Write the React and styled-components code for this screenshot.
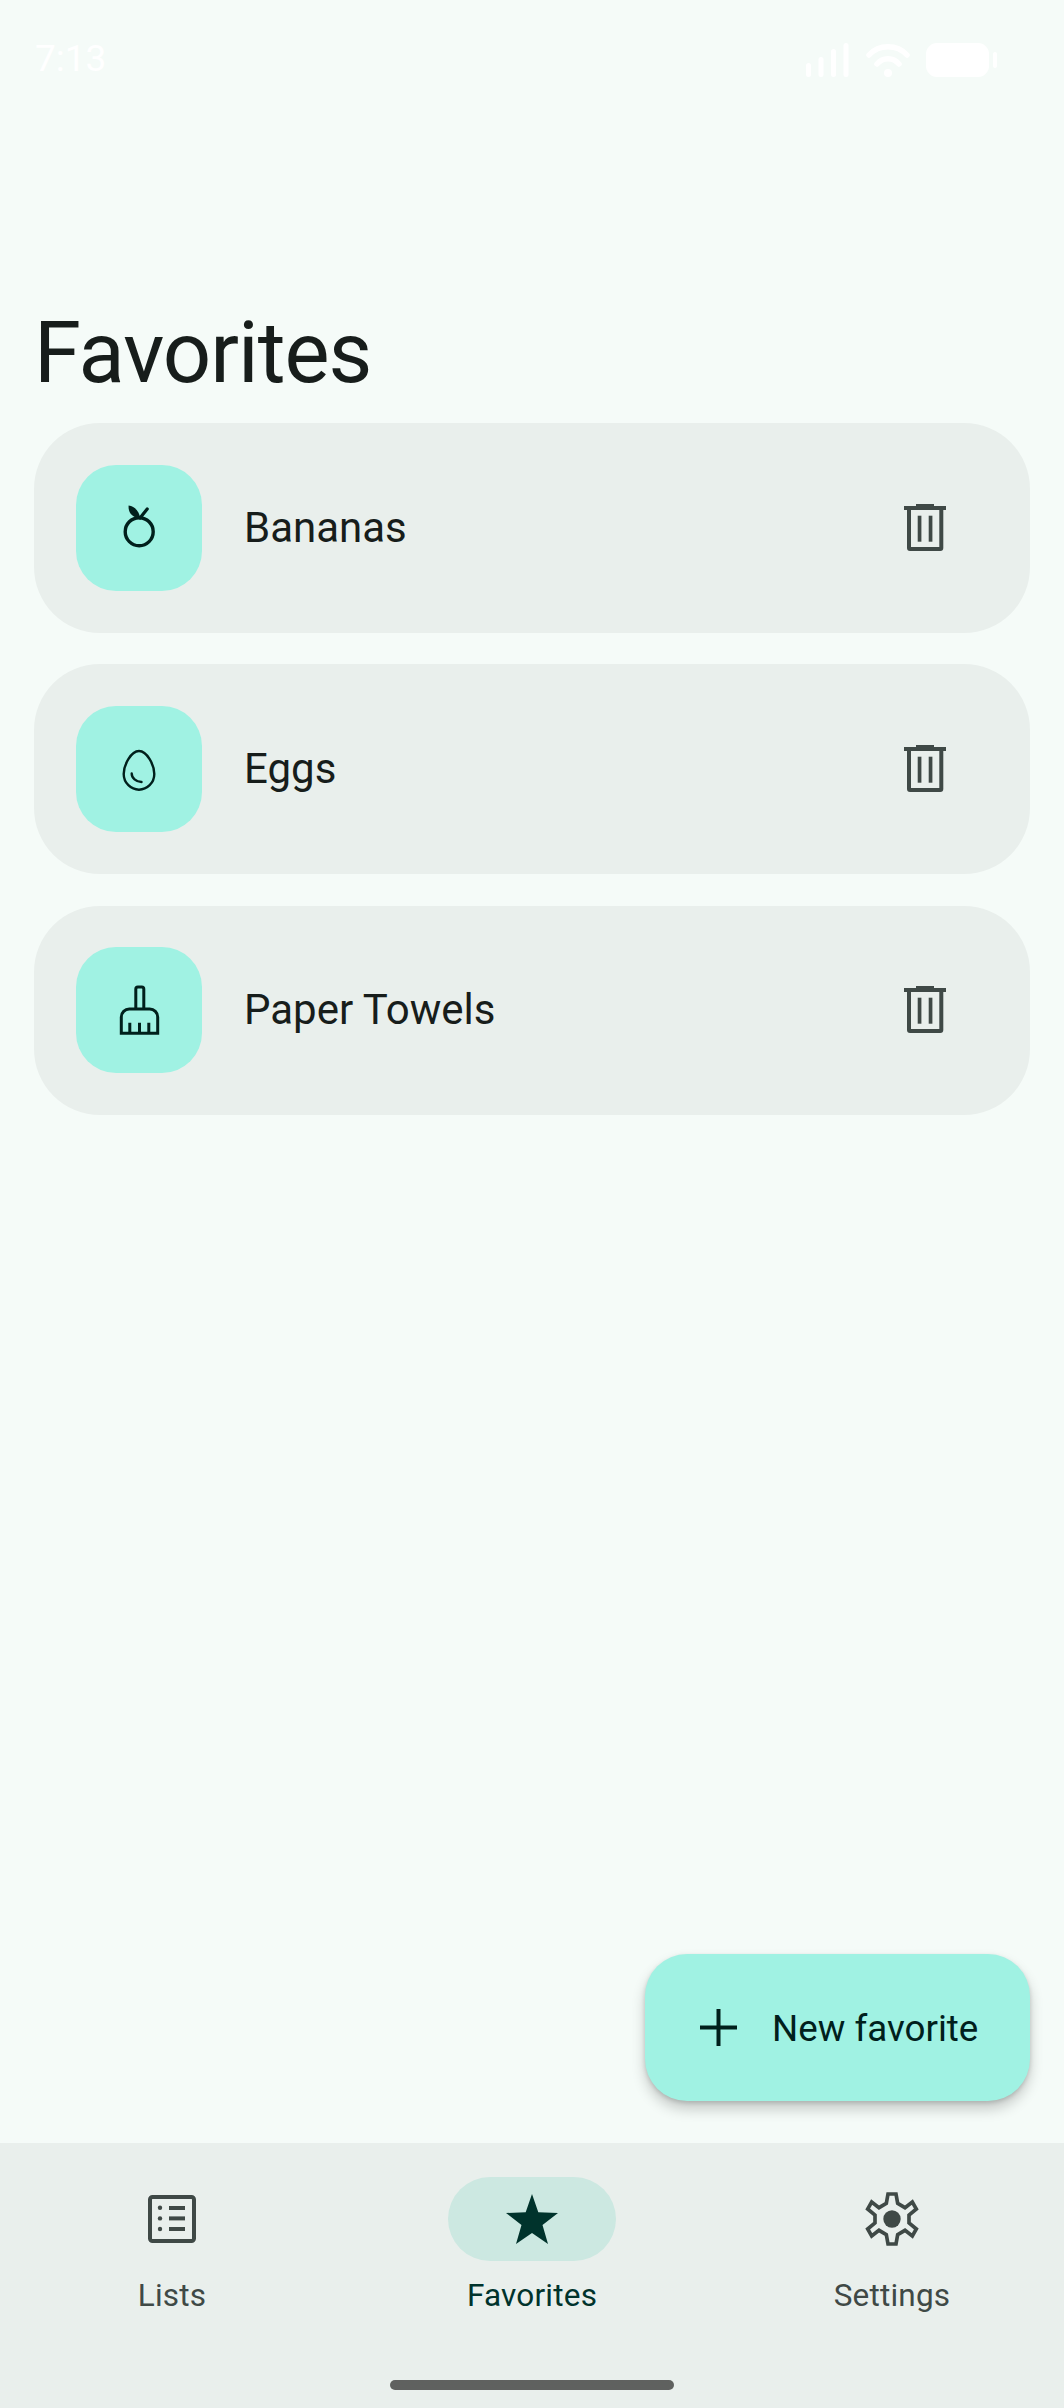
import React from "react";
import styled, { createGlobalStyle } from "styled-components";

const Global = createGlobalStyle`
  html, body { margin: 0; padding: 0; background: #f5fbf8; }
  * { box-sizing: border-box; }
`;

const Screen = styled.div`
  width: 1064px;
  height: 2408px;
  background: #f5fbf8;
  display: flex;
  flex-direction: column;
  font-family: Roboto, "Liberation Sans", sans-serif;
  color: #171d1b;
  overflow: hidden;
`;

const StatusBar = styled.div`
  height: 120px;
  flex: none;
  display: flex;
  justify-content: space-between;
  align-items: flex-start;
  padding: 37px 75px 0 35px;
  color: #fff;
`;

const Clock = styled.span`
  font-size: 37px;
  line-height: 44px;
`;

const StatusIcons = styled.div`
  display: flex;
  align-items: center;
  gap: 16px;
  margin-top: 6px;
`;

const Battery = styled.div`
  width: 63px;
  height: 34px;
  border-radius: 11px;
  background: #fff;
  position: relative;
  &::after {
    content: "";
    position: absolute;
    left: 67px;
    top: 9px;
    width: 4px;
    height: 16px;
    border-radius: 2px;
    background: #fff;
  }
`;

const Main = styled.main`
  flex: 1;
  display: flex;
  flex-direction: column;
  padding: 0 34px 42px;
`;

const Title = styled.h1`
  margin: 0;
  padding-top: 185px;
  height: 303px;
  font-size: 85px;
  line-height: 96px;
  letter-spacing: -1px;
  font-weight: 400;
  color: #171d1b;
`;

const List = styled.div`
  display: flex;
  flex-direction: column;
  gap: 31.5px;
`;

const Card = styled.div`
  height: 209.8px;
  border-radius: 66px;
  background: #e9efec;
  display: flex;
  align-items: center;
  padding: 0 81px 0 42px;
`;

const IconBox = styled.div`
  width: 126px;
  height: 126px;
  flex: none;
  border-radius: 40px;
  background: #a0f2e3;
  display: flex;
  align-items: center;
  justify-content: center;
  color: #00201c;
`;

const ItemName = styled.span`
  flex: 1;
  margin-left: 42px;
  font-size: 42px;
  line-height: 56px;
  color: #171d1b;
`;

const TrashButton = styled.div`
  width: 48px;
  height: 52px;
  flex: none;
  color: #3f4946;
`;

const Fab = styled.div`
  margin-top: auto;
  align-self: flex-end;
  height: 147px;
  width: 385px;
  border-radius: 42px;
  background: #a0f2e3;
  box-shadow: 0 8px 14px rgba(0, 0, 0, 0.2), 0 2px 4px rgba(0, 0, 0, 0.14);
  display: flex;
  align-items: center;
  padding-left: 55px;
  gap: 35px;
  color: #00201c;
`;

const FabLabel = styled.span`
  font-size: 36.75px;
  line-height: 50px;
  padding-top: 2px;
`;

const Nav = styled.nav`
  height: 265px;
  flex: none;
  background: #e9efec;
  display: grid;
  grid-template-columns: repeat(3, 1fr);
  column-gap: 16px;
  padding-top: 34px;
  position: relative;
`;

const NavItem = styled.div`
  display: flex;
  flex-direction: column;
  align-items: center;
  gap: 14.5px;
`;

const NavPill = styled.div`
  width: 168px;
  height: 84px;
  border-radius: 42px;
  display: flex;
  align-items: center;
  justify-content: center;
  background: ${(p) => (p.$active ? "#cce8e1" : "transparent")};
  color: ${(p) => (p.$active ? "#00332c" : "#3f4946")};
`;

const NavLabel = styled.span`
  font-size: 31.5px;
  line-height: 40px;
  letter-spacing: 0.2px;
  color: ${(p) => (p.$active ? "#00332c" : "#3f4946")};
`;

const HomeBar = styled.div`
  position: absolute;
  left: 390px;
  bottom: 18px;
  width: 284px;
  height: 10px;
  border-radius: 5px;
  background: #5f615f;
`;

const Signal = () => (
  <svg width="44" height="34" viewBox="0 0 44 34" fill="#fff">
    <rect x="0" y="20" width="5" height="14" rx="2.5" />
    <rect x="12.5" y="14" width="5" height="20" rx="2.5" />
    <rect x="25" y="6" width="5" height="28" rx="2.5" />
    <rect x="37.5" y="0" width="5" height="34" rx="2.5" />
  </svg>
);

const Wifi = () => (
  <svg width="44" height="34" viewBox="0 0 44 34" fill="none" stroke="#fff" strokeLinecap="round">
    <path d="M3 12 C13 1 31 1 41 12" strokeWidth="5.5" />
    <path d="M11 21 C17 14 27 14 33 21" strokeWidth="5.5" />
    <circle cx="22" cy="30" r="4" fill="#fff" stroke="none" />
  </svg>
);

const Fruit = () => (
  <svg width="64" height="64" viewBox="0 0 64 64" fill="none" stroke="currentColor">
    <circle cx="32.2" cy="35.7" r="14" strokeWidth="3.4" />
    <path d="M21.6 9.6 C28 10.5 32.5 15.5 33.2 22.6 C26 22 21 17 21.6 9.6Z" fill="currentColor" stroke="none" />
    <path d="M33 22 L40.2 13" strokeWidth="3.2" strokeLinecap="round" />
  </svg>
);

const Egg = () => (
  <svg width="64" height="64" viewBox="0 0 64 64" fill="none" stroke="currentColor" strokeWidth="2.4">
    <path d="M32 14 C40 14 47.3 28 47.3 37 C47.3 46 40 52.7 32 52.7 C24 52.7 16.7 46 16.7 37 C16.7 28 24 14 32 14Z" />
    <path d="M24.7 36.5 C24.7 41 29 45 34.5 45" strokeLinecap="round" />
  </svg>
);

const Broom = () => (
  <svg width="64" height="64" viewBox="0 0 64 64" fill="none" stroke="currentColor" strokeWidth="3">
    <path d="M28.8 31 V11 a2 2 0 0 1 2 -2 h4 a2 2 0 0 1 2 2 V31" />
    <path d="M14.3 55.2 V39 a8 8 0 0 1 8 -8 H42.7 a8 8 0 0 1 8 8 V55.2 Z" />
    <path d="M22.8 44.7 V55 M32.5 44.7 V55 M41.8 44.7 V55" />
  </svg>
);

const Trash = () => (
  <svg width="48" height="52" viewBox="0 0 48 52" fill="currentColor">
    <rect x="15" y="2" width="18" height="3" />
    <rect x="3" y="4" width="42" height="4" />
    <path d="M6 8 H42.3 V46 a3 3 0 0 1 -3 3 H9 a3 3 0 0 1 -3 -3 Z M10 8 V45 H38.3 V8 Z" fillRule="evenodd" />
    <rect x="16.7" y="13.7" width="3.7" height="26" />
    <rect x="27.7" y="13.7" width="3.7" height="26" />
  </svg>
);

const Plus = () => (
  <svg width="37" height="37" viewBox="0 0 37 37" fill="currentColor">
    <rect x="16.5" y="0" width="4" height="37" />
    <rect x="0" y="16.5" width="37" height="4" />
  </svg>
);

const ListIcon = () => (
  <svg width="48" height="48" viewBox="0 0 48 48" fill="currentColor">
    <rect x="2" y="2" width="44" height="44" rx="2.5" fill="none" stroke="currentColor" strokeWidth="4" />
    <circle cx="12" cy="12.8" r="2.2" />
    <circle cx="12" cy="23.4" r="2.2" />
    <circle cx="12" cy="34" r="2.2" />
    <rect x="21" y="11" width="16" height="4" />
    <rect x="21" y="21.4" width="16" height="4" />
    <rect x="21" y="32" width="16" height="4" />
  </svg>
);

const Star = () => (
  <svg width="52" height="50" viewBox="0 0 52 50" fill="currentColor">
    <path d="M26 0 L32.3 18.2 L52 19 L36.5 31 L42 50 L26 39 L10 50 L15.5 31 L0 19 L19.7 18.2 Z" />
  </svg>
);

const Gear = () => (
  <svg width="60" height="60" viewBox="65 60 180 180" fill="none" stroke="currentColor">
    <path
      d="M143 75 H167 L172 103 L194 116 L216 99 L228 120 L206 138 V162 L228 180 L216 201 L194 184 L172 197 L167 225 H143 L138 197 L116 184 L94 201 L82 180 L104 162 V138 L82 120 L94 99 L116 116 L138 103 Z"
      strokeWidth="11"
      strokeLinejoin="miter"
    />
    <circle cx="155" cy="150" r="26" fill="currentColor" stroke="none" />
  </svg>
);

const items = [
  { name: "Bananas", icon: <Fruit /> },
  { name: "Eggs", icon: <Egg /> },
  { name: "Paper Towels", icon: <Broom /> },
];

const tabs = [
  { label: "Lists", icon: <ListIcon /> },
  { label: "Favorites", icon: <Star />, active: true },
  { label: "Settings", icon: <Gear /> },
];

export default function App() {
  return (
    <Screen>
      <Global />
      <StatusBar>
        <Clock>7:13</Clock>
        <StatusIcons>
          <Signal />
          <Wifi />
          <Battery />
        </StatusIcons>
      </StatusBar>
      <Main>
        <Title>Favorites</Title>
        <List>
          {items.map((it) => (
            <Card key={it.name}>
              <IconBox>{it.icon}</IconBox>
              <ItemName>{it.name}</ItemName>
              <TrashButton>
                <Trash />
              </TrashButton>
            </Card>
          ))}
        </List>
        <Fab>
          <Plus />
          <FabLabel>New favorite</FabLabel>
        </Fab>
      </Main>
      <Nav>
        {tabs.map((t) => (
          <NavItem key={t.label}>
            <NavPill $active={t.active}>{t.icon}</NavPill>
            <NavLabel $active={t.active}>{t.label}</NavLabel>
          </NavItem>
        ))}
        <HomeBar />
      </Nav>
    </Screen>
  );
}
